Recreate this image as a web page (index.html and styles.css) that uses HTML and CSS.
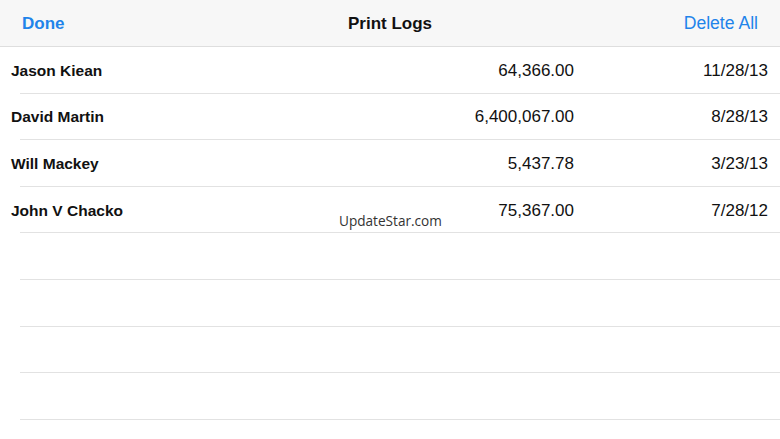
FILE: index.html
```html
<!DOCTYPE html>
<html>
<head>
<meta charset="utf-8">
<link rel="stylesheet" href="styles.css">
</head>
<body>
<div class="screen">
  <header class="navbar">
    <span class="nav-btn nav-done">Done</span>
    <span class="nav-title">Print Logs</span>
    <span class="nav-btn nav-delete">Delete All</span>
  </header>
  <div class="list">
    <div class="row"><span class="name">Jason Kiean</span><span class="amount">64,366.00</span><span class="date">11/28/13</span></div>
    <div class="row"><span class="name">David Martin</span><span class="amount">6,400,067.00</span><span class="date">8/28/13</span></div>
    <div class="row"><span class="name">Will Mackey</span><span class="amount">5,437.78</span><span class="date">3/23/13</span></div>
    <div class="row"><span class="name">John V Chacko</span><span class="amount">75,367.00</span><span class="date">7/28/12</span></div>
    <div class="row"></div>
    <div class="row"></div>
    <div class="row"></div>
    <div class="row"></div>
  </div>
  <div class="watermark">UpdateStar.com</div>
</div>
</body>
</html>
```
FILE: styles.css
```css
* { box-sizing: border-box; }
html, body { margin: 0; padding: 0; background: #ffffff; }
.screen {
  position: relative;
  width: 780px;
  height: 439px;
  overflow: hidden;
  font-family: "Liberation Sans", Arial, sans-serif;
  color: #111;
}
.navbar {
  height: 47px;
  background: #f7f7f7;
  border-bottom: 1px solid #dedede;
  display: grid;
  grid-template-columns: 1fr auto 1fr;
  align-items: center;
  padding: 1px 22px 0 22px;
}
.nav-btn { color: #1f84ea; font-size: 17px; }
.nav-done { font-weight: bold; justify-self: start; }
.nav-delete { justify-self: end; font-size: 17.6px; }
.nav-title { font-weight: bold; font-size: 17px; color: #111; }
.list { display: flex; flex-direction: column; }
.row {
  height: 46.6px;
  display: grid;
  grid-template-columns: 1fr 200px 194px;
  align-items: center;
  padding: 1px 12px 0 11px;
  background: linear-gradient(#e2e2e2, #e2e2e2) no-repeat 20px 100% / calc(100% - 20px) 1px;
}
.name { font-weight: bold; font-size: 15.5px; }
.amount, .date { text-align: right; font-size: 17px; }
.watermark {
  position: absolute;
  left: 339px;
  top: 211px;
  font-family: "Open Sans", sans-serif;
  font-size: 13.6px;
  color: #333;
}
```
